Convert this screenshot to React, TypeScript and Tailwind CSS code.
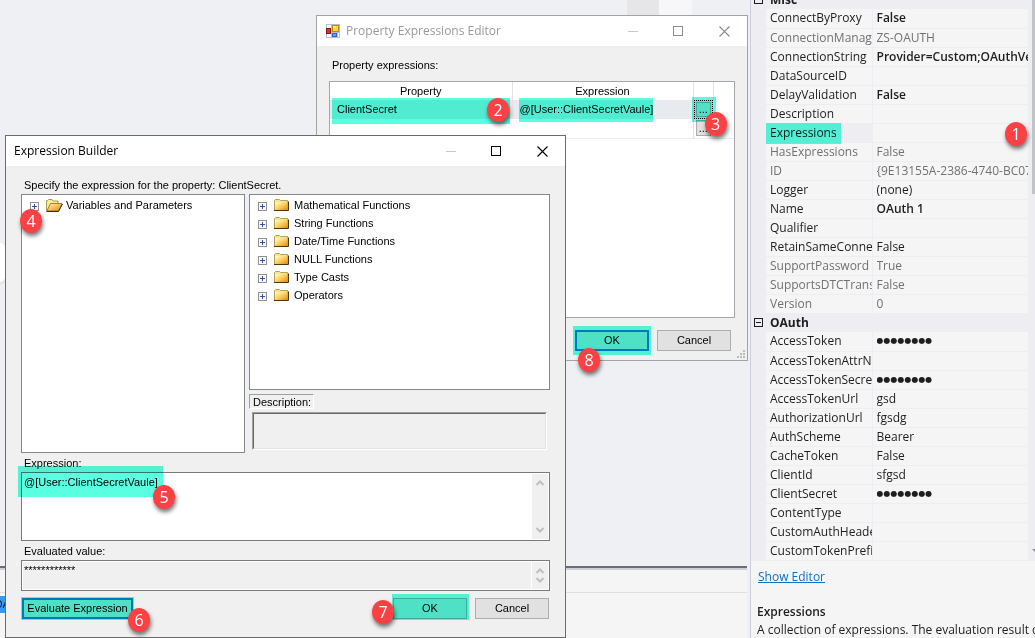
import React from "react";

type Property = { name: string; value?: string; bold?: boolean; muted?: boolean; marked?: boolean; secret?: boolean };
type Group = { title: string; items: Property[] };

const groups: Group[] = [
  {
    title: "Misc",
    items: [
      { name: "ConnectByProxy", value: "False", bold: true },
      { name: "ConnectionManage", value: "ZS-OAUTH", muted: true },
      { name: "ConnectionString", value: "Provider=Custom;OAuthVe", bold: true },
      { name: "DataSourceID" },
      { name: "DelayValidation", value: "False", bold: true },
      { name: "Description" },
      { name: "Expressions", marked: true },
      { name: "HasExpressions", value: "False", muted: true },
      { name: "ID", value: "{9E13155A-2386-4740-BC07-0", muted: true },
      { name: "Logger", value: "(none)" },
      { name: "Name", value: "OAuth 1", bold: true },
      { name: "Qualifier" },
      { name: "RetainSameConnec", value: "False" },
      { name: "SupportPassword", value: "True", muted: true },
      { name: "SupportsDTCTransa", value: "False", muted: true },
      { name: "Version", value: "0", muted: true },
    ],
  },
  {
    title: "OAuth",
    items: [
      { name: "AccessToken", value: "●●●●●●●●", secret: true },
      { name: "AccessTokenAttrNa" },
      { name: "AccessTokenSecret", value: "●●●●●●●●", secret: true },
      { name: "AccessTokenUrl", value: "gsd" },
      { name: "AuthorizationUrl", value: "fgsdg" },
      { name: "AuthScheme", value: "Bearer" },
      { name: "CacheToken", value: "False" },
      { name: "ClientId", value: "sfgsd" },
      { name: "ClientSecret", value: "●●●●●●●●", secret: true },
      { name: "ContentType" },
      { name: "CustomAuthHeade" },
      { name: "CustomTokenPrefix" },
    ],
  },
];

const functionFolders = [
  "Mathematical Functions",
  "String Functions",
  "Date/Time Functions",
  "NULL Functions",
  "Type Casts",
  "Operators",
];

function Badge({ n, className }: { n: number; className: string }) {
  return (
    <span
      className={`pointer-events-none absolute z-30 flex h-6 w-[22px] items-center justify-center rounded-[50%] bg-[#fc4144] font-['Open_Sans',sans-serif] text-base leading-6 text-white shadow-[1px_3px_4px_rgba(0,0,0,0.55)] ${className}`}
    >
      {n}
    </span>
  );
}

function Marker({ className }: { className: string }) {
  return <span className={`pointer-events-none absolute z-20 bg-[#59ffe0] mix-blend-multiply ${className}`} />;
}

function WindowControls({ active }: { active: boolean }) {
  const color = active ? "text-black" : "text-[#8c8c8c]";
  return (
    <div className={`flex ${color}`}>
      <button type="button" aria-label="Minimize" disabled className="flex h-[30px] w-[45px] items-center justify-center text-[#c8c8c8]">
        <svg width="10" height="10" shapeRendering="crispEdges"><path d="M0 5.5h10" stroke="currentColor" /></svg>
      </button>
      <button type="button" aria-label="Maximize" className="flex h-[30px] w-[46px] items-center justify-center">
        <svg width="10" height="10" fill="none" shapeRendering="crispEdges"><path d="M.5.5h9v9h-9z" stroke="currentColor" /></svg>
      </button>
      <button type="button" aria-label="Close" className="flex h-[30px] w-[46px] items-center justify-center">
        <svg width="11" height="11"><path d="M.5.5l10 10M10.500.5l-10 10" stroke="currentColor" strokeWidth="1.1" /></svg>
      </button>
    </div>
  );
}

function FormIcon() {
  return (
    <svg width="14" height="14" viewBox="0 0 14 14" shapeRendering="crispEdges">
      <path d="M0 0h14v14H0z" fill="#b9bcc4" />
      <path d="M1 1h4v3H1zM1 10h4v3H1zM12 9h1v4h-1z" fill="#fff" />
      <path d="M0 4h5v6H0z" fill="#8f1510" />
      <path d="M1 5h3v4H1z" fill="#c83a30" />
      <path d="M6 1h7v7H6z" fill="#b98a14" />
      <path d="M7 2h5v5H7z" fill="#ffd23c" />
      <path d="M7 2h3v2H7z" fill="#ffe98c" />
      <path d="M6 9h5v4H6z" fill="#2f63cf" />
      <path d="M7 10h3v2H7z" fill="#6c9df2" />
    </svg>
  );
}

function FolderIcon({ open }: { open?: boolean }) {
  if (open) {
    return (
      <svg width="17" height="13" viewBox="0 0 17 13">
        <defs>
          <linearGradient id="openFront" x1="0" y1="0" x2="1" y2="1">
            <stop offset="0" stopColor="#fff0b0" />
            <stop offset=".45" stopColor="#fbc45c" />
            <stop offset="1" stopColor="#d98e1c" />
          </linearGradient>
        </defs>
        <path d="M.5 11.500V1.500h1l1-1h3.500l1 1.500h5v3" fill="#f8ec9a" stroke="#a99a4c" />
        <path d="M.8 12L4.500 4.500h11.500L12.500 12z" fill="url(#openFront)" stroke="#8a6a22" strokeWidth=".8" />
        <path d="M.5 12.500h12l4-7.500" fill="none" stroke="#3a2e10" />
      </svg>
    );
  }
  return (
    <svg width="15" height="12" viewBox="0 0 15 12">
      <defs>
        <linearGradient id="closedFront" x1="0" y1="0" x2="1" y2="1">
          <stop offset="0" stopColor="#fffbe0" />
          <stop offset=".35" stopColor="#fbe07e" />
          <stop offset=".6" stopColor="#fbc04e" />
          <stop offset="1" stopColor="#d98c10" />
        </linearGradient>
      </defs>
      <path d="M.5 11V1.500l1-1h4l1 1h7V11z" fill="#f6e58c" stroke="#b3a252" />
      <path d="M1 3h12.500v8H1z" fill="url(#closedFront)" />
      <path d="M0 11.500h14.500V2.500" fill="none" stroke="#4a390e" />
    </svg>
  );
}

function TreeItem({ label, open }: { label: string; open?: boolean }) {
  return (
    <li className="flex h-[18px] items-center">
      <button type="button" aria-label={`Expand ${label}`} className="mt-0.5 mr-[7px]">
        <svg width="9" height="9" shapeRendering="crispEdges" className="block">
          <path d="M.5.5h8v8h-8z" fill="#f8f8f8" stroke="#919191" />
          <path d="M2 4.500h5M4.500 2v5" stroke="#3a4fa5" />
        </svg>
      </button>
      <span className="flex w-5 items-center"><FolderIcon open={open} /></span>
      <span className="whitespace-nowrap">{label}</span>
    </li>
  );
}

function PushButton({ children, primary, className }: { children: React.ReactNode; primary?: boolean; className: string }) {
  return (
    <button
      type="button"
      className={`h-[21px] bg-[#e1e1e1] text-center leading-[17px] ${primary ? "border-2 border-[#0078d7]" : "border border-[#adadad]"} ${className}`}
    >
      {children}
    </button>
  );
}

function ScrollRail({ className = "" }: { className?: string }) {
  return (
    <div className={`flex w-4 flex-col items-center justify-between bg-[#f0f0f0] py-1.5 text-[#bfbfbf] ${className}`}>
      <svg width="8" height="6" fill="none"><path d="M.5 5L4 1.500L7.500 5" stroke="currentColor" strokeWidth="2" /></svg>
      <svg width="8" height="6" fill="none"><path d="M.5 1L4 4.500L7.500 1" stroke="currentColor" strokeWidth="2" /></svg>
    </div>
  );
}

function PropertyExpressionsEditor() {
  return (
    <section className="absolute top-[15px] left-[316px] z-10 w-[432px] border border-[#a3a3a3] bg-[#f0f0f0] text-[11px]">
      <header className="flex h-[30px] items-center bg-white pl-[9px]">
        <FormIcon />
        <h2 className="ml-1.5 flex-1 font-['Open_Sans',sans-serif] text-xs text-[#999999]">Property Expressions Editor</h2>
        <WindowControls active={false} />
      </header>
      <div className="px-3 pt-[11px] pb-[9px]">
        <p className="mb-2 ml-[3px] leading-4">Property expressions:</p>
        <div className="h-[237px] border border-[#a3a6ab] bg-white">
          <table className="w-full table-fixed border-collapse">
            <colgroup>
              <col className="w-[182px]" />
              <col className="w-[181px]" />
              <col className="w-5" />
              <col />
            </colgroup>
            <thead>
              <tr className="h-[18px]">
                <th className="border-r border-[#e3e3e3] p-0 font-normal">Property</th>
                <th className="border-r border-[#e3e3e3] p-0 font-normal">Expression</th>
                <th className="border-r border-[#e3e3e3] p-0" aria-label="Edit" />
                <th className="p-0" aria-label="Filler" />
              </tr>
            </thead>
            <tbody>
              <tr className="h-[19px] bg-[#e7ebf0]">
                <td className="relative border-r border-[#e3e3e3] py-0 pl-[7px]">
                  ClientSecret
                  <Marker className="-top-0.5 left-0.5 h-[26px] w-[178px]" />
                  <Badge n={2} className="-top-0.5 left-[157px]" />
                </td>
                <td className="relative border-r border-[#e3e3e3] py-0 pl-[7px]">
                  @[User::ClientSecretVaule]
                  <Marker className="-top-0.5 left-1.5 h-6 w-[134px]" />
                </td>
                <td className="relative p-0">
                  <div className="border border-dotted border-black p-px">
                    <button type="button" aria-label="Edit expression" className="block h-[15px] w-full border border-[#adadad] bg-[#e1e1e1] leading-[13px]">...</button>
                  </div>
                  <Marker className="-top-[3px] -left-0.5 h-[25px] w-6" />
                  <Badge n={3} className="top-3 left-[11px]" />
                </td>
                <td className="bg-white p-0" />
              </tr>
              <tr className="h-[19px] border-b border-[#ececec]">
                <td className="p-0" />
                <td className="border-r border-[#e3e3e3] p-0" />
                <td className="px-0.5 py-0">
                  <button type="button" aria-label="Add expression" className="block h-4 w-full border border-[#adadad] bg-[#e1e1e1] leading-[13px]">...</button>
                </td>
                <td className="p-0" />
              </tr>
            </tbody>
          </table>
        </div>
        <div className="mt-3 mr-1 flex justify-end gap-2">
          <div className="relative">
            <PushButton primary className="w-[74px]">OK</PushButton>
            <Marker className="-inset-x-0.5 -inset-y-1" />
            <Badge n={8} className="top-[18px] left-[3px]" />
          </div>
          <PushButton className="w-[74px]">Cancel</PushButton>
        </div>
      </div>
      <svg width="8" height="8" className="absolute right-0.5 bottom-0.5" fill="#bdbdbd" shapeRendering="crispEdges">
        <path d="M6 0h2v2H6zM3 3h2v2H3zM6 3h2v2H6zM0 6h2v2H0zM3 6h2v2H3zM6 6h2v2H6z" />
      </svg>
    </section>
  );
}

function ExpressionBuilder() {
  return (
    <section className="absolute top-[135px] left-[5px] z-20 w-[561px] border border-[#6b6b6b] bg-[#f0f0f0] text-[11px]">
      <header className="flex h-[30px] items-center bg-white pl-2">
        <h2 className="flex-1 font-['Open_Sans',sans-serif] text-xs text-black">Expression Builder</h2>
        <WindowControls active />
      </header>
      <div className="px-[15px] pt-3 pb-[18px]">
        <p className="mb-0.5 ml-[3px] leading-[14px]">Specify the expression for the property: ClientSecret.</p>
        <div className="flex gap-1">
          <div className="relative h-[259px] w-56 border border-[#828790] bg-white">
            <ul className="pt-px pl-2">
              <TreeItem label="Variables and Parameters" open />
            </ul>
            <Badge n={4} className="top-3.5 -left-0.5" />
          </div>
          <div className="flex-1">
            <ul className="h-[196px] border border-[#828790] bg-white pt-px pl-2">
              {functionFolders.map((label) => (
                <TreeItem key={label} label={label} />
              ))}
            </ul>
            <p className="mt-1 h-[15px] w-[65px] border border-t-[#a0a0a0] border-r-white border-b-white border-l-[#a0a0a0] pl-[3px] leading-[14px]">Description:</p>
            <div className="mt-[3px] mr-[3px] ml-[3px] h-[38px] border border-t-[#a0a0a0] border-r-white border-b-white border-l-[#a0a0a0]">
              <div className="h-full border border-t-[#696969] border-r-[#e3e3e3] border-b-[#e3e3e3] border-l-[#696969]" />
            </div>
          </div>
        </div>
        <label htmlFor="expression" className="mt-0.5 mb-px ml-[3px] block leading-4">Expression:</label>
        <div className="relative flex h-[69px] border border-[#7a7a7a] bg-white p-px">
          <textarea id="expression" defaultValue="@[User::ClientSecretVaule]" className="block min-w-0 flex-1 resize-none overflow-hidden p-px leading-[14px] outline-none" />
          <ScrollRail />
          <Marker className="-top-[7px] -left-1 h-[31px] w-[145px]" />
          <Badge n={5} className="top-3 left-[131px]" />
        </div>
        <label htmlFor="evaluated" className="mt-0.5 ml-[3px] block leading-4">Evaluated value:</label>
        <div className="mt-px flex h-[31px] border border-[#7a7a7a] bg-white p-px">
          <textarea id="evaluated" readOnly defaultValue="************" className="block min-w-0 flex-1 resize-none overflow-hidden bg-[#f0f0f0] p-px leading-[14px] outline-none" />
          <ScrollRail className="ml-px" />
        </div>
        <div className="mt-[7px] mr-px flex gap-2">
          <div className="relative mr-auto ml-px">
            <PushButton primary className="w-[111px]">Evaluate Expression</PushButton>
            <Marker className="-inset-px" />
            <Badge n={6} className="top-2.5 left-[106px]" />
          </div>
          <div className="relative">
            <PushButton className="w-[74px]">OK</PushButton>
            <Marker className="-top-1 -left-px h-[26px] w-[77px]" />
            <Badge n={7} className="top-0.5 -left-[21px]" />
          </div>
          <PushButton className="w-[74px]">Cancel</PushButton>
        </div>
      </div>
    </section>
  );
}

function PropertyGrid() {
  return (
    <aside className="flex w-[285px] shrink-0 flex-col border-l border-[#cccedb] bg-[#f5f5f5] font-['Open_Sans','Noto_Sans',sans-serif] text-xs text-[#1e1e1e]">
      <div className="relative flex justify-between overflow-hidden bg-[#eeeef2]">
        <table className="-mt-2.5 w-[277px] table-fixed border-collapse">
          <colgroup>
            <col className="w-[15px]" />
            <col className="w-[106px]" />
            <col />
          </colgroup>
          {groups.map((group) => (
            <tbody key={group.title}>
              <tr className="h-[19px]">
                <td className="p-0">
                  <button type="button" aria-label={`Collapse ${group.title}`} className="ml-[3px] block">
                    <svg width="9" height="9" fill="none" shapeRendering="crispEdges"><path d="M.5.5h8v8h-8zM2 4.500h5" stroke="#1e1e1e" /></svg>
                  </button>
                </td>
                <th colSpan={2} className="py-0 pl-1 text-left leading-[18px] font-bold">{group.title}</th>
              </tr>
              {group.items.map((item) => (
                <tr key={item.name} className={`h-[19px] ${item.muted ? "text-[#717171]" : ""}`}>
                  <td className="p-0" />
                  <td className={`relative border-r border-b border-[#eeeef2] py-0 pr-0 pl-1 ${item.marked ? "" : "bg-[#f5f5f5]"}`}>
                    <div className="overflow-hidden leading-[18px] whitespace-nowrap">{item.name}</div>
                    {item.marked && <Marker className="-top-px left-0 h-[21px] w-[75px]" />}
                  </td>
                  <td className="relative border-b border-[#eeeef2] bg-[#f5f5f5] py-0 pr-0 pl-1">
                    <div
                      className={`overflow-hidden leading-[18px] whitespace-nowrap ${item.bold ? "font-semibold" : ""} ${item.secret ? "font-['DejaVu_Sans',sans-serif] text-[8px]" : ""}`}
                    >
                      {item.value ?? "\u00a0"}
                    </div>
                    {item.marked && <Badge n={1} className="-top-0.5 right-px" />}
                  </td>
                </tr>
              ))}
            </tbody>
          ))}
        </table>
        <div className="flex w-[3px] flex-col justify-between overflow-hidden">
          <div className="h-[194px] bg-[#c2c3c9]" />
          <svg width="8" height="12"><path d="M0 0h8L4 4z" fill="#868999" /></svg>
        </div>
      </div>
      <div className="pt-2 pl-1.5">
        <a href="#editor" className="block pl-px leading-4 text-[#0e70c0] underline">Show Editor</a>
        <h3 className="mt-[18px] leading-[18px] font-semibold">Expressions</h3>
        <p className="overflow-hidden leading-[18px] whitespace-nowrap">A collection of expressions. The evaluation result of</p>
      </div>
    </aside>
  );
}

function Workspace() {
  return (
    <main className="relative flex min-w-0 flex-1 flex-col overflow-hidden bg-[#eff0f3]">
      <div className="flex h-[15px] justify-end">
        <div className="w-8 bg-[#e6e6e9]" />
        <div className="w-[33px] bg-[#f7f7f9]" />
        <div className="w-[58px] bg-[#eef0f3]" />
      </div>
      <div className="flex-1" />
      <div className="mr-[3px] h-[73px] border-t-2 border-[#6d6d6d] bg-[#f5f5f5]">
        <div className="h-[25px] border-t-2 border-b border-t-[#cccedb] border-b-[#e0e0e0]" />
        <div className="mt-[3px] h-[17px] w-20 overflow-hidden bg-[#3399ff] text-[11px] leading-[17px] text-[#1e1e1e]">
          <span className="-ml-1.5">OA</span>
        </div>
      </div>
      <div className="absolute top-[242px] -left-10 h-[41px] w-[46px] rounded-lg bg-white shadow-sm" />
    </main>
  );
}

export default function App() {
  return (
    <div className="relative flex min-h-screen overflow-hidden bg-[#eeeef2] font-['Liberation_Sans',Arial,sans-serif] text-black">
      <Workspace />
      <PropertyExpressionsEditor />
      <ExpressionBuilder />
      <PropertyGrid />
    </div>
  );
}
